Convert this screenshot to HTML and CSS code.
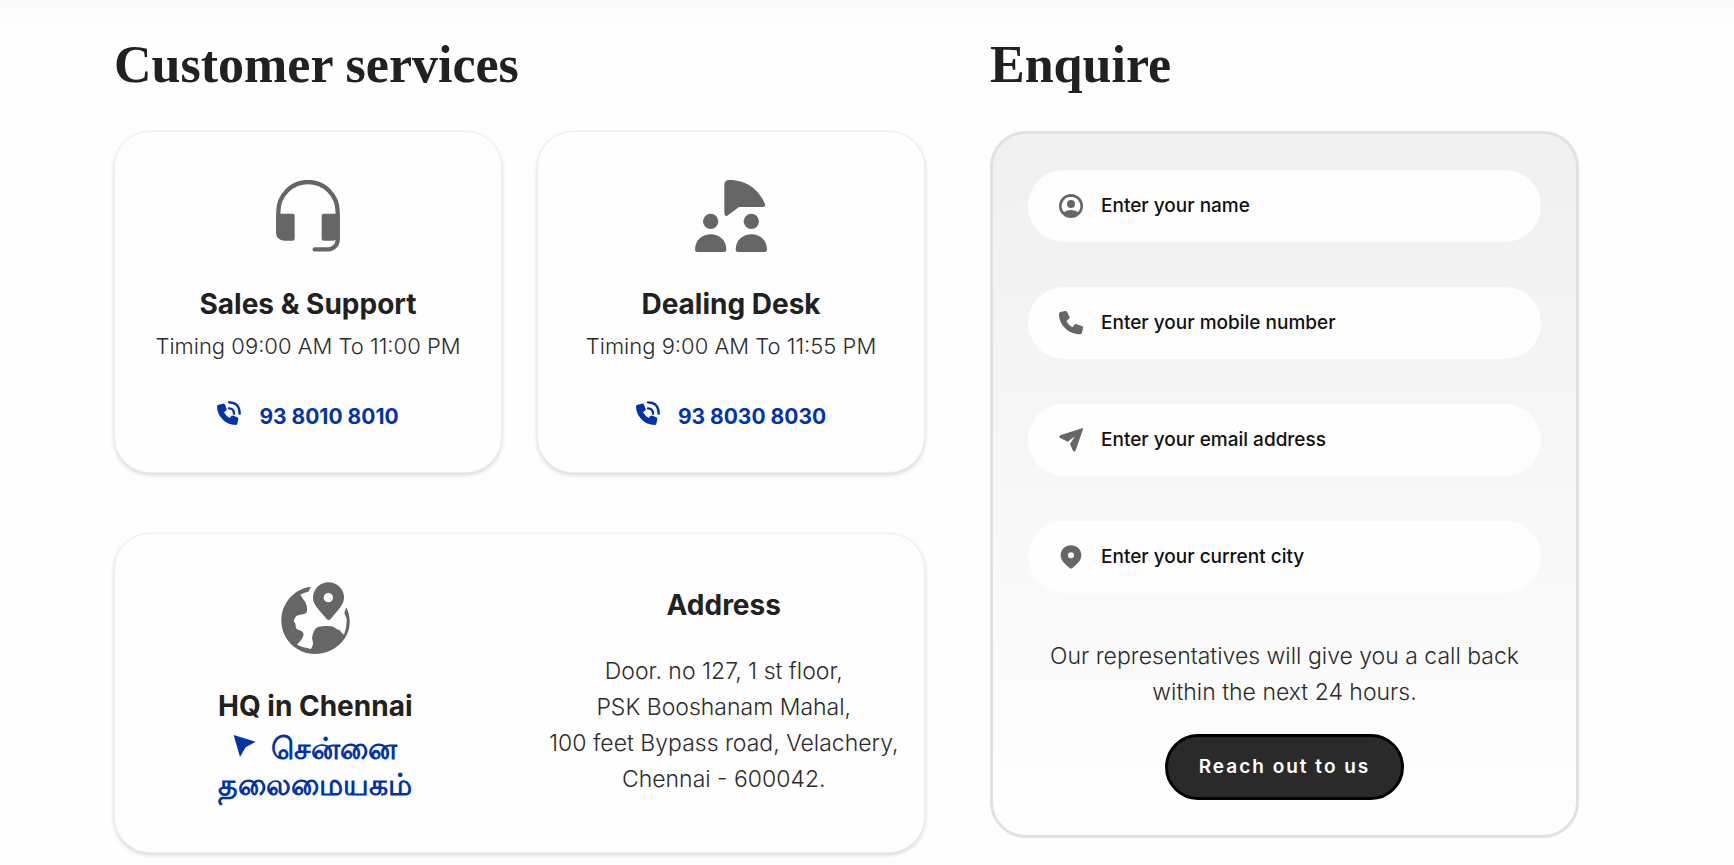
FILE: index.html
```html
<!DOCTYPE html>
<html lang="en">
<head>
  <meta charset="UTF-8">
  <meta name="viewport" content="width=device-width, initial-scale=1.0">
  <title>Customer services</title>
  <link rel="stylesheet" href="styles.css">
</head>
<body>
  <main class="contact">
    <section class="services">
      <h2 class="section-title">Customer services</h2>
      <div class="service-cards">
        <div class="card">
          <svg class="card-icon" viewBox="0 0 216 216" aria-hidden="true">
            <path d="M19 108V95a89 89 0 0 1 178 0v84a29 29 0 0 1-29 29h-40" fill="none" stroke="currentColor" stroke-width="13" stroke-linecap="round"/>
            <path d="M12 101h50q6 0 6 6v69q0 6-6 6H38q-26 0-26-26z"/>
            <path d="M155 101h48v79l-14 0-4 2h-30q-6 0-6-6v-69q0-6 6-6z"/>
          </svg>
          <h3>Sales &amp; Support</h3>
          <p>Timing 09:00 AM To 11:00 PM</p>
          <a class="phone" href="tel:9380108010">
            <svg class="link-icon" viewBox="0 0 72 72" aria-hidden="true">
              <path d="M5 11l13-3q4-1 6 3l5 12q1 4-2 6l-6 5q6 11 17 17l5-6q3-3 6-1l12 5q4 2 3 6l-3 13q-1 4-5 4C25 72 0 46 0 16q0-4 5-5z"/>
              <path d="M36 4q32 0 32 34M36 22q15 0 15 16" fill="none" stroke="currentColor" stroke-width="7" stroke-linecap="round"/>
            </svg>
            <span>93 8010 8010</span>
          </a>
        </div>
        <div class="card">
          <svg class="card-icon" viewBox="0 0 216 216" aria-hidden="true">
            <path d="M88 14Q88 0 102 0c58 0 92 34 108 72q3 9-6 9h-72l-35 26q-9 3-9-7z"/>
            <circle cx="47" cy="124" r="23"/>
            <circle cx="169" cy="124" r="23"/>
            <path d="M0 209c0-62 94-62 94 0q0 7-7 7H7q-7 0-7-7z"/>
            <path d="M122 209c0-62 94-62 94 0q0 7-7 7h-80q-7 0-7-7z"/>
          </svg>
          <h3>Dealing Desk</h3>
          <p>Timing 9:00 AM To 11:55 PM</p>
          <a class="phone" href="tel:9380308030">
            <svg class="link-icon" viewBox="0 0 72 72" aria-hidden="true">
              <path d="M5 11l13-3q4-1 6 3l5 12q1 4-2 6l-6 5q6 11 17 17l5-6q3-3 6-1l12 5q4 2 3 6l-3 13q-1 4-5 4C25 72 0 46 0 16q0-4 5-5z"/>
              <path d="M36 4q32 0 32 34M36 22q15 0 15 16" fill="none" stroke="currentColor" stroke-width="7" stroke-linecap="round"/>
            </svg>
            <span>93 8030 8030</span>
          </a>
        </div>
      </div>
      <div class="card office">
        <div class="hq">
          <svg class="card-icon" viewBox="0 0 216 216" aria-hidden="true">
            <path fill-rule="evenodd" d="M96 14l-8 15q-14 3-24 9l16 24q5 10 4 26-1 7-8 8l-16 3q-10 2-11 7l-5 10 5 9 2 12q2 5 8 7l9 3q4 2 6 10-1 9-8 18l-7 7-5 6q17 9 42 13 6-7 6-19l-3-15q2-12 8-24 4-7 13-9 16-3 37-1 8 1 17 9l7 2 10 11 4 3q9-22 8-47l-7-19 6-16c34 72-22 140-94 140C50 216 7 170 7 115 7 65 44 20 96 14z"/>
            <path fill-rule="evenodd" d="M102 47a46 46 0 0 1 93 0c0 22-20 39-40 64q-6 6-12 0c-20-25-41-42-41-64zm32 0a14 14 0 1 0 28 0 14 14 0 1 0-28 0z"/>
          </svg>
          <h3>HQ in Chennai</h3>
          <a class="map-link" href="#" lang="ta">
            <svg class="link-icon" viewBox="0 0 72 72" aria-hidden="true">
              <path d="M2 0l66 20-30 17-17 29z"/>
            </svg>
            சென்னை<br>தலைமையகம்
          </a>
        </div>
        <div class="address">
          <h3>Address</h3>
          <p>Door. no 127, 1 st floor,<br>PSK Booshanam Mahal,<br>100 feet Bypass road, Velachery,<br>Chennai - 600042.</p>
        </div>
      </div>
    </section>

    <section class="enquire">
      <h2 class="section-title">Enquire</h2>
      <form class="enquire-form">
        <label class="field">
          <svg class="field-icon" viewBox="0 0 24 24" aria-hidden="true">
            <path fill-rule="evenodd" d="M12 0a12 12 0 1 1 0 24 12 12 0 0 1 0-24zm0 3a9 9 0 0 0-7 15q7-4 14 0a9 9 0 0 0-7-15z"/>
            <circle cx="12" cy="10" r="4"/>
          </svg>
          <input type="text" name="name" placeholder="Enter your name" aria-label="Name">
        </label>
        <label class="field">
          <svg class="field-icon" viewBox="0 0 72 72" aria-hidden="true">
            <path d="M4 3l14-3q5-1 7 4l6 13q2 4-2 7l-7 6q7 13 18 19l6-7q3-4 7-2l15 5q5 2 4 6l-3 14q-1 5-6 5C28 69 0 42 0 9q0-5 4-6z"/>
          </svg>
          <input type="tel" name="mobile" placeholder="Enter your mobile number" aria-label="Mobile number">
        </label>
        <label class="field">
          <svg class="field-icon" viewBox="0 0 72 72" aria-hidden="true">
            <path d="M69 1q4-1 3 3L50 67q-2 5-6 3-2-1-3-4l-8-18 15-23-22 16-21-10q-5-2-4-5 0-3 5-5z"/>
          </svg>
          <input type="email" name="email" placeholder="Enter your email address" aria-label="Email address">
        </label>
        <label class="field">
          <svg class="field-icon" viewBox="0 0 72 72" aria-hidden="true">
            <path fill-rule="evenodd" d="M36 1c18 0 31 13 31 30 0 15-12 26-27 38q-4 3-8 0C17 57 5 46 5 31 5 14 18 1 36 1zm0 21a9 9 0 1 0 0 18 9 9 0 0 0 0-18z"/>
          </svg>
          <input type="text" name="city" placeholder="Enter your current city" aria-label="Current city">
        </label>
        <p class="note">Our representatives will give you a call back within the next 24 hours.</p>
        <button type="submit" class="submit">Reach out to us</button>
      </form>
    </section>
  </main>
</body>
</html>
```
FILE: styles.css
```css
* {
  box-sizing: border-box;
}

body {
  margin: 0;
  font-family: Inter, "Noto Sans", sans-serif;
  font-size: 22px;
  line-height: 36px;
  color: #2b2b2b;
  background: linear-gradient(#f9f9f9, #fefefe 32px) no-repeat #fefefe;
}

h2,
h3,
p {
  margin: 0;
}

.contact {
  display: grid;
  grid-template-columns: 811fr 589fr;
  gap: 65px;
  align-items: start;
  padding: 32px 155px 10px 114px;
}

.section-title {
  margin-bottom: 33px;
  font-family: "Liberation Serif", serif;
  font-size: 52px;
  font-weight: 600;
  line-height: 66px;
  color: #212121;
}

.service-cards {
  display: grid;
  grid-template-columns: 1fr 1fr;
  gap: 35px;
  margin-bottom: 60px;
}

.card {
  padding: 48px 0 37px;
  text-align: center;
  background-color: #fefefe;
  border: 1px solid #efefef;
  border-radius: 36px;
  box-shadow: 0 2px 4px rgba(0, 0, 0, 0.16);
}

.card h3 {
  margin-bottom: 2px;
  font-size: 28px;
  font-weight: 700;
  line-height: 44px;
  color: #212121;
}

.card p,
.note {
  font-weight: 300;
}

.card-icon {
  display: block;
  width: 72px;
  height: 72px;
  margin: 0 auto 30px;
  fill: currentColor;
  color: #666666;
}

.link-icon {
  width: 24px;
  height: 24px;
  fill: currentColor;
}

.phone,
.map-link {
  color: #0233a8;
  text-decoration: none;
}

.phone {
  display: inline-flex;
  gap: 18px;
  margin-top: 35px;
  font-size: 21px;
  font-weight: 700;
}

.phone .link-icon {
  margin-top: 2px;
}

.office {
  display: grid;
  grid-template-columns: 1fr 1fr;
  gap: 8px;
  padding: 48px 0 50px;
}

.map-link {
  display: block;
  font-size: 30px;
  font-weight: 600;
}

.map-link .link-icon {
  margin-right: 6px;
}

.address {
  padding-top: 1px;
}

.address h3 {
  margin-bottom: 26px;
}

.address p,
.note {
  font-size: 23px;
}

.enquire-form {
  display: flex;
  flex-direction: column;
  align-items: center;
  padding: 36px 35px 35px;
  background: linear-gradient(#f0f0f0, #fefefe);
  border: 3px solid #e1e1e1;
  border-radius: 36px;
}

.field {
  display: flex;
  align-items: center;
  gap: 18px;
  width: 100%;
  height: 72px;
  margin-bottom: 45px;
  padding: 0 31px;
  background-color: #fefefe;
  border-radius: 36px;
}

.field-icon {
  flex: none;
  width: 24px;
  height: 24px;
  fill: #666666;
}

.field input {
  flex: 1;
  min-width: 0;
  padding: 0;
  font: inherit;
  font-size: 19px;
  font-weight: 500;
  color: #111111;
  background: none;
  border: none;
  outline: none;
}

.field input::placeholder {
  color: #111111;
  opacity: 1;
}

.note {
  max-width: 480px;
  margin-bottom: 24px;
  text-align: center;
}

.submit {
  padding: 12px 31px;
  font: inherit;
  font-size: 19px;
  font-weight: 600;
  letter-spacing: 2px;
  color: #ffffff;
  background-color: #2a2a2a;
  border: 3px solid #000000;
  border-radius: 33px;
  cursor: pointer;
}
```
